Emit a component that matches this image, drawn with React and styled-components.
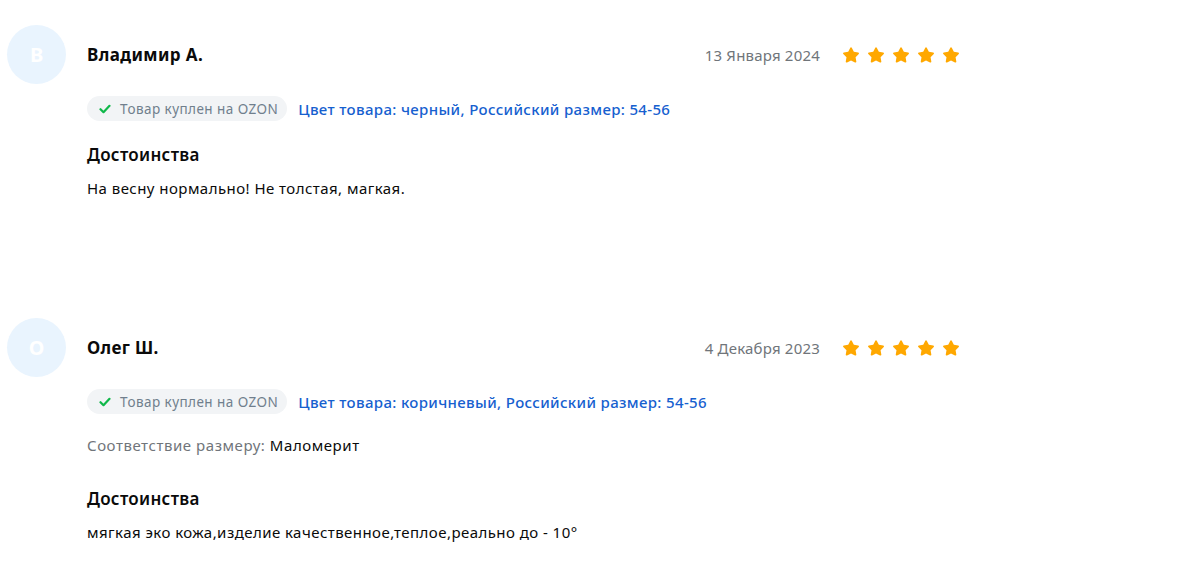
import React from "react";
import styled, { createGlobalStyle } from "styled-components";

const GlobalStyle = createGlobalStyle`
  html, body {
    margin: 0;
    padding: 0;
    background: #ffffff;
  }
  body {
    font-family: "Noto Sans", "Liberation Sans", sans-serif;
    color: #001a34;
  }
`;

const reviews = [
  {
    id: 1,
    letter: "В",
    name: "Владимир А.",
    date: "13 Января 2024",
    rating: 5,
    variant: "Цвет товара: черный, Российский размер: 54-56",
    pros: "На весну нормально! Не толстая, магкая.",
  },
  {
    id: 2,
    letter: "О",
    name: "Олег Ш.",
    date: "4 Декабря 2023",
    rating: 5,
    variant: "Цвет товара: коричневый, Российский размер: 54-56",
    fit: "Маломерит",
    pros: "мягкая эко кожа,изделие качественное,теплое,реально до - 10°",
  },
];

const List = styled.div`
  display: flex;
  flex-direction: column;
  gap: 120px;
  padding: 25px 0 0 7px;
`;

const Review = styled.article`
  display: grid;
  grid-template-columns: 59px 874px;
  column-gap: 21px;
`;

const Avatar = styled.div`
  width: 59px;
  height: 59px;
  border-radius: 50%;
  background: #e9f4fe;
  color: #ffffff;
  display: flex;
  align-items: center;
  justify-content: center;
  font-size: 20px;
  font-weight: 700;
`;

const Body = styled.div`
  display: flex;
  flex-direction: column;
`;

const Head = styled.div`
  height: 59px;
  display: flex;
  align-items: center;
  justify-content: space-between;
`;

const Name = styled.div`
  font-size: 17px;
  font-weight: 700;
  letter-spacing: 0.4px;
  color: #0a0a0a;
`;

const Right = styled.div`
  display: flex;
  align-items: center;
  gap: 21px;
`;

const Date = styled.span`
  font-size: 15px;
  letter-spacing: 0.2px;
  color: #70757a;
`;

const Stars = styled.div`
  display: flex;
  gap: 5px;
`;

const Meta = styled.div`
  display: flex;
  align-items: center;
  gap: 11px;
  margin-top: 12px;
`;

const Chip = styled.span`
  display: inline-flex;
  align-items: center;
  gap: 9px;
  height: 25px;
  padding: 0 9px 0 12px;
  border-radius: 13px;
  background: #f2f4f6;
  color: #707f8d;
  font-size: 13.5px;
  letter-spacing: 0.45px;
`;

const Variant = styled.span`
  font-size: 15px;
  font-weight: 500;
  letter-spacing: 0.35px;
  color: #1660cf;
`;

const Fit = styled.div`
  margin-top: 21px;
  margin-bottom: 10px;
  font-size: 15px;
  letter-spacing: 0.55px;
  line-height: 20px;
  color: #70757a;

  b {
    font-weight: 400;
    color: #0a0a0a;
  }
`;

const SectionTitle = styled.div`
  margin-top: 24px;
  font-size: 17px;
  font-weight: 600;
  letter-spacing: 0.3px;
  line-height: 20px;
  color: #0a0a0a;
`;

const Text = styled.p`
  margin: 13px 0 0;
  font-size: 15px;
  letter-spacing: 0.45px;
  line-height: 20px;
  color: #0a0a0a;
`;

const Star = () => (
  <svg width="20" height="18" viewBox="0 0 24 22">
    <path
      d="M12 1.6c.5 0 .9.3 1.1.7l2.4 4.8 5.3.8c.9.1 1.3 1.3.7 1.9l-3.9 3.8.9 5.3c.2.9-.8 1.6-1.6 1.2L12 17.6l-4.8 2.5c-.8.4-1.8-.3-1.6-1.2l.9-5.3-3.9-3.8c-.6-.6-.3-1.8.7-1.9l5.3-.8 2.4-4.8c.2-.4.6-.7 1-.7z"
      fill="#ffa800"
    />
  </svg>
);

const Check = () => (
  <svg width="12" height="10" viewBox="0 0 12 10">
    <path
      d="M1.5 5.2l3 3 6-6.4"
      fill="none"
      stroke="#10b84a"
      strokeWidth="2.2"
      strokeLinecap="round"
      strokeLinejoin="round"
    />
  </svg>
);

const ReviewItem = ({ review }) => (
  <Review>
    <Avatar>{review.letter}</Avatar>
    <Body>
      <Head>
        <Name>{review.name}</Name>
        <Right>
          <Date>{review.date}</Date>
          <Stars>
            {Array.from({ length: review.rating }).map((_, i) => (
              <Star key={i} />
            ))}
          </Stars>
        </Right>
      </Head>
      <Meta>
        <Chip>
          <Check />
          Товар куплен на OZON
        </Chip>
        <Variant>{review.variant}</Variant>
      </Meta>
      {review.fit ? (
        <Fit>
          Соответствие размеру: <b>{review.fit}</b>
        </Fit>
      ) : null}
      <SectionTitle>Достоинства</SectionTitle>
      <Text>{review.pros}</Text>
    </Body>
  </Review>
);

const App = () => (
  <>
    <GlobalStyle />
    <List>
      {reviews.map((r) => (
        <ReviewItem key={r.id} review={r} />
      ))}
    </List>
  </>
);

export default App;
